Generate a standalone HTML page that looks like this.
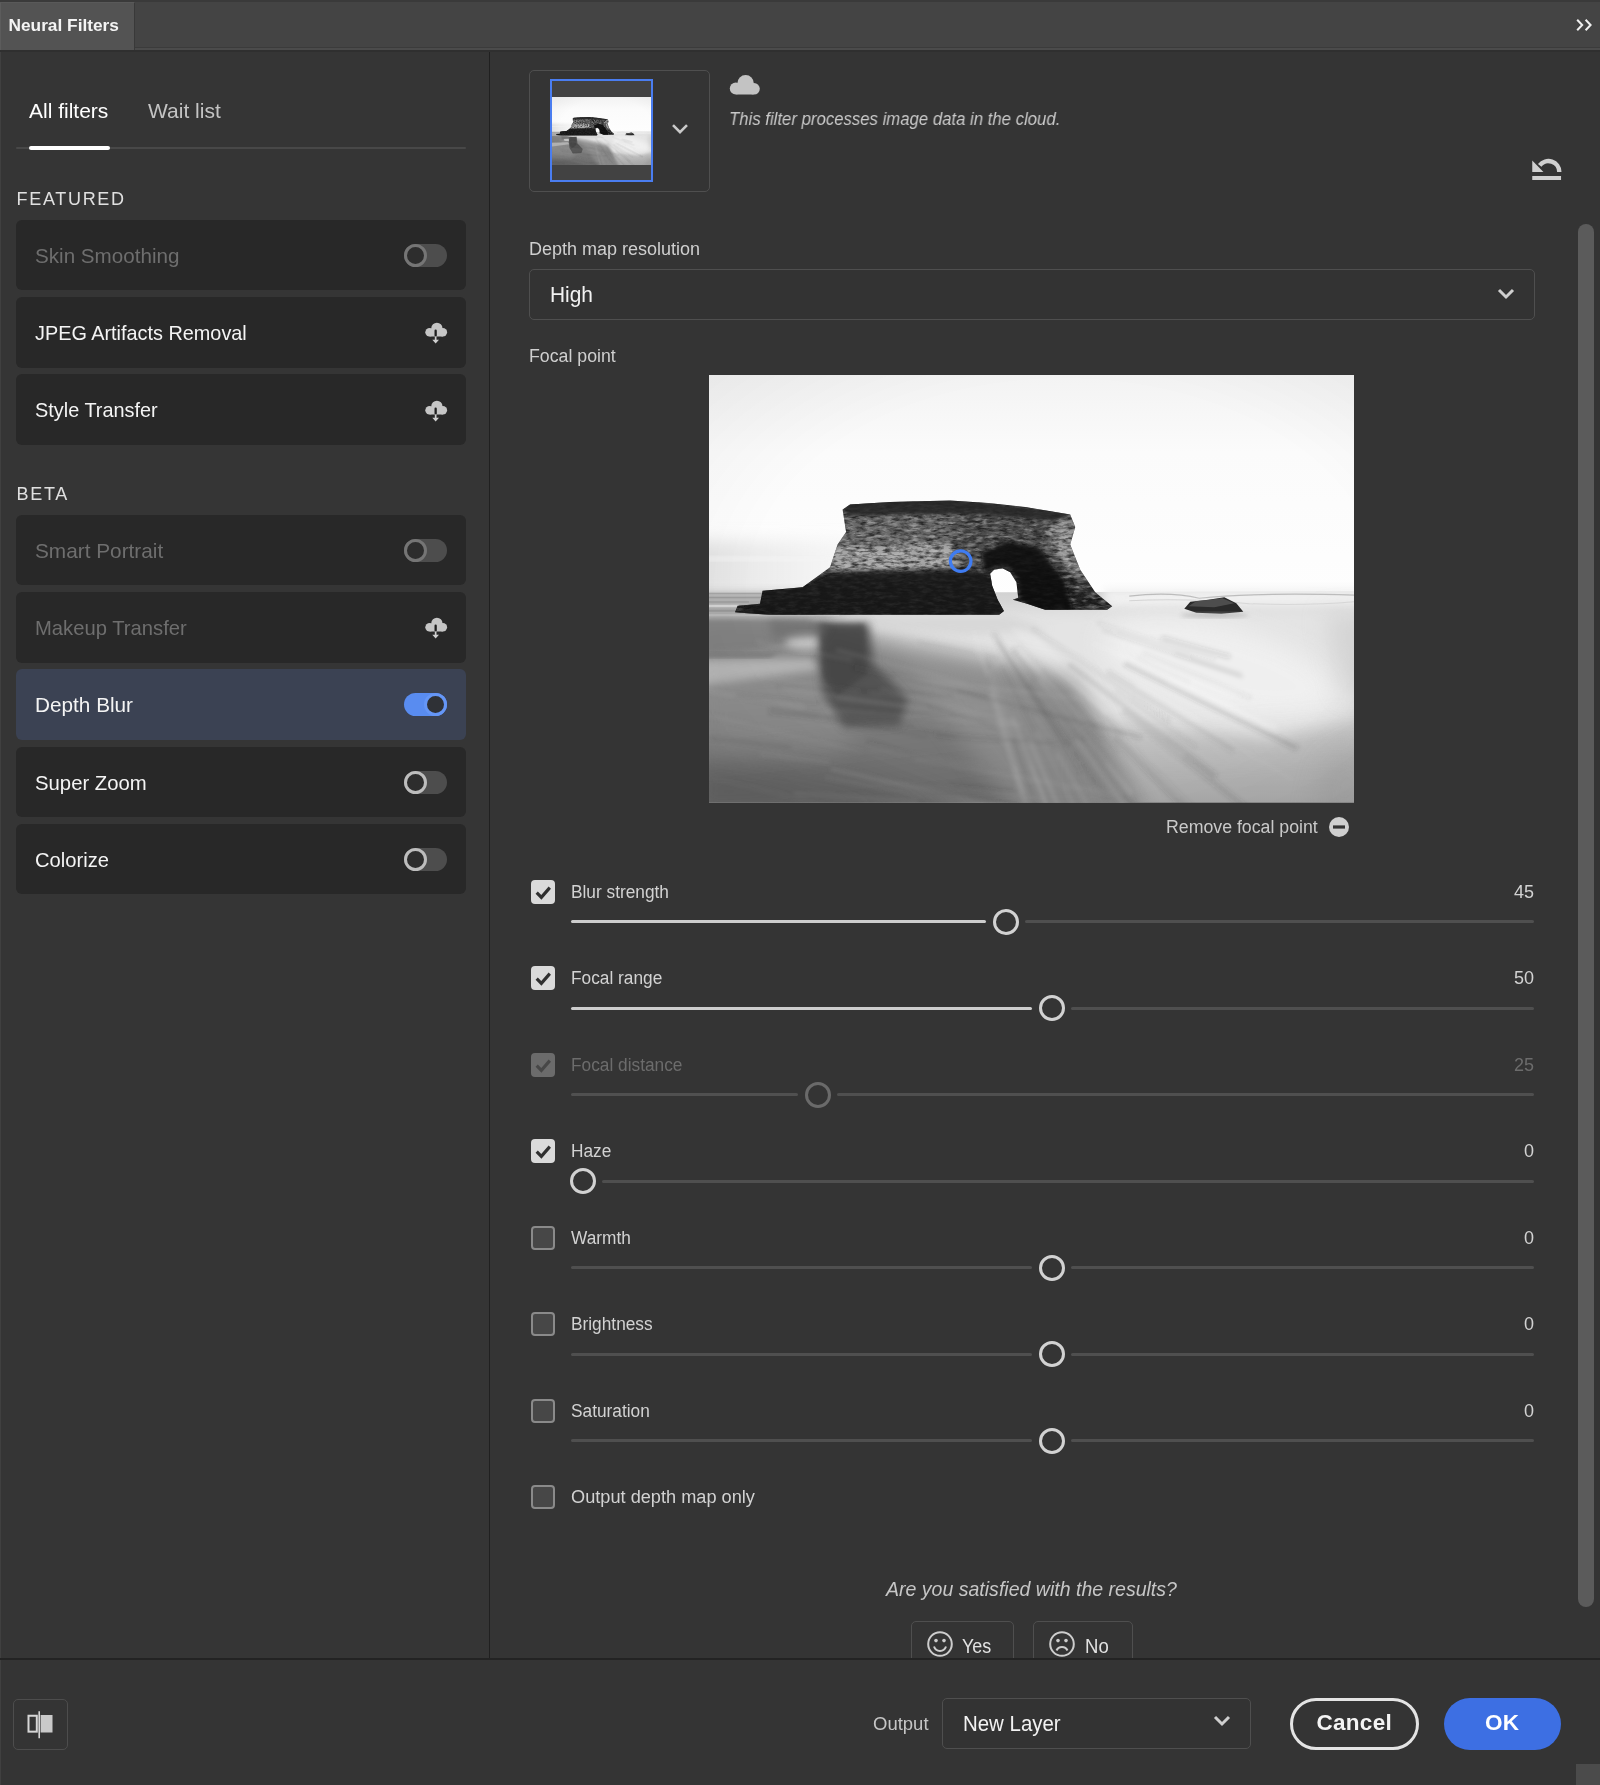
<!DOCTYPE html>
<html><head><meta charset="utf-8"><title>Neural Filters</title>
<style>
*{box-sizing:border-box;margin:0;padding:0}
html,body{width:1600px;height:1785px;overflow:hidden;background:#343434;font-family:"Liberation Sans",sans-serif;color:#e6e6e6}
.abs{position:absolute}
#L,#right,#footer,#titlebar{will-change:transform}
#titlebar{position:absolute;left:0;top:0;width:1600px;height:52px;background:#444;border-top:2px solid #3a3a3a;border-bottom:2px solid #2f2f2f;z-index:5}
#titlebar .tab{position:absolute;left:0;top:0;width:135px;height:48px;background:#535353;border-right:1px solid #393939;border-top:1px solid #595959;border-left:1px solid #5c5c5c}
#titlebar .tab span{position:absolute;left:7.5px;top:12px;font-weight:bold;font-size:17.3px;color:#f4f4f4;white-space:nowrap}
#titlebar .line{position:absolute;left:135px;right:0;bottom:0;height:3px;background:#4b4b4b;border-top:1px solid #3b3b3b}
#left{position:absolute;left:0;top:50px;width:489px;height:1608px;background:#353535;border-left:1px solid #404040}
#vdiv{position:absolute;left:488.7px;top:50px;width:1.7px;height:1608px;background:#202020}
#right{position:absolute;left:490px;top:50px;width:1110px;height:1608px;background:#343434;overflow:hidden}
#footer{position:absolute;left:0;top:1657.5px;width:1600px;height:128px;background:#343434;border-top:2px solid #232323;box-shadow:inset 1px 0 0 #404040}
.tabs{position:absolute;left:16px;top:147px;width:450px;height:2.4px;background:#484848;border-radius:1px}
.tabs i{position:absolute;left:13px;top:-1.3px;width:81px;height:4.4px;border-radius:2.2px;background:#fff}
.t1,.t2{position:absolute;top:98.5px;font-size:21px;white-space:nowrap}
.t1{left:29px;color:#fff}.t2{left:148px;color:#c4c4c4}
.sec{position:absolute;left:16.5px;font-size:18px;letter-spacing:1.7px;color:#e0e0e0;white-space:nowrap}
.item{position:absolute;left:16px;width:450px;height:70.5px;background:#282828;border-radius:6px}
.item.sel{background:#3b4253}
.item span{position:absolute;left:19px;top:24px;font-size:21px;color:#f4f4f4;white-space:nowrap;transform:scaleX(.955);transform-origin:0 50%}
.item.dis span{color:#6e6e6e}
.tog{position:absolute;left:388px;top:24px;width:43px;height:23px;border-radius:12px;background:#4d4d4d}
.tog i{position:absolute;left:0;top:0;width:23px;height:23px;border-radius:50%;border:3px solid #bdbdbd;background:#2d2d2d}
.dis .tog i{border-color:#757575}
.tog.on{background:#598cf0}
.tog.on i{left:20px;border-color:#6596f6;background:#2f3136}
.cloud{position:absolute;left:407.5px;top:25.3px;width:24px;height:22px}

#R{position:absolute;left:-490px;top:-50px;width:1600px;height:1785px}
#R .lbl{position:absolute;margin-top:.7px;font-size:18px;color:#cfcfcf;white-space:nowrap;transform:scaleX(.96);transform-origin:0 50%}
#R .val{position:absolute;margin-top:.7px;right:66px;font-size:18px;color:#cfcfcf;white-space:nowrap;text-align:right}
.box{position:absolute;border:1.7px solid #4f4f4f;border-radius:5px}
.dd{position:absolute;border:1.7px solid #4f4f4f;border-radius:5px;background:#333}
.dd span{position:absolute;left:20px;font-size:22px;color:#f2f2f2;white-space:nowrap;transform:scaleX(.95);transform-origin:0 50%}
.cb{position:absolute;left:531px;width:24.4px;height:24.4px;border-radius:4px;background:#dadada}
.cb svg{position:absolute;left:0;top:0;width:24.4px;height:24.4px}
.cb.off{background:#474747;border:2px solid #8a8a8a}
.cb.dis{background:#6b6b6b}
.trk{position:absolute;height:3.2px;border-radius:2px;background:#4f4f4f}
.trk.f{background:#cdcdcd}
.trk.fd{background:#505050}
.th{position:absolute;width:26.2px;height:26.2px;border-radius:50%;border:3.8px solid #d2d2d2}
.th.dis{border-color:#6a6a6a}
.it{font-style:italic}
</style></head><body>
<svg width="0" height="0" style="position:absolute"><defs><symbol id="photo" viewBox="0 0 645 426"><defs>
<linearGradient id="pSky" x1="0" y1="0" x2="0" y2="1"><stop offset="0" stop-color="#f3f3f3"/><stop offset=".18" stop-color="#fbfbfb"/><stop offset=".55" stop-color="#fefefe"/><stop offset="1" stop-color="#f7f7f7"/></linearGradient>
<radialGradient id="pVig" cx=".55" cy=".5" r=".8"><stop offset=".6" stop-color="#000" stop-opacity="0"/><stop offset="1" stop-color="#000" stop-opacity=".05"/></radialGradient>
<linearGradient id="pSkyL" x1="0" y1="0" x2="1" y2="0"><stop offset="0" stop-color="#d6d6d6" stop-opacity=".75"/><stop offset="1" stop-color="#e6e6e6" stop-opacity="0"/></linearGradient>
<linearGradient id="pSea" x1="0" y1="0" x2="0" y2="1"><stop offset="0" stop-color="#d2d2d2"/><stop offset=".15" stop-color="#d8d8d8"/><stop offset=".55" stop-color="#d0d0d0"/><stop offset=".8" stop-color="#bcbcbc"/><stop offset="1" stop-color="#a8a8a8"/></linearGradient>
<linearGradient id="pSand" x1="0" y1="0" x2=".25" y2="1"><stop offset="0" stop-color="#8e8e8e"/><stop offset=".5" stop-color="#7e7e7e"/><stop offset="1" stop-color="#6a6a6a"/></linearGradient>
<linearGradient id="pRock" x1="0" y1="0" x2="0" y2="1"><stop offset="0" stop-color="#3c3c3c"/><stop offset=".12" stop-color="#545454"/><stop offset=".5" stop-color="#5a5a5a"/><stop offset=".66" stop-color="#333"/><stop offset="1" stop-color="#1b1b1b"/></linearGradient>
<filter id="pB1" x="-10%" y="-10%" width="120%" height="120%"><feGaussianBlur stdDeviation="1"/></filter>
<filter id="pB2" x="-20%" y="-20%" width="140%" height="140%"><feGaussianBlur stdDeviation="2"/></filter>
<filter id="pB4" x="-30%" y="-30%" width="160%" height="160%"><feGaussianBlur stdDeviation="4"/></filter>
<filter id="pB8" x="-40%" y="-40%" width="180%" height="180%"><feGaussianBlur stdDeviation="8"/></filter>
<filter id="pB12" x="-50%" y="-50%" width="200%" height="200%"><feGaussianBlur stdDeviation="12"/></filter>
<filter id="pB20" x="-60%" y="-60%" width="220%" height="220%"><feGaussianBlur stdDeviation="20"/></filter>
<filter id="pTex" x="0" y="0" width="100%" height="100%"><feTurbulence type="fractalNoise" baseFrequency=".09 .3" numOctaves="3" seed="4" result="n"/><feColorMatrix in="n" type="matrix" values="0 0 0 0 0  0 0 0 0 0  0 0 0 0 0  2.4 0 0 0 -.95" result="a"/><feFlood flood-color="#cfcfcf"/><feComposite in2="a" operator="in"/><feComposite in2="SourceAlpha" operator="in"/></filter>
<filter id="pTexD" x="0" y="0" width="100%" height="100%"><feTurbulence type="fractalNoise" baseFrequency=".12 .35" numOctaves="3" seed="11" result="n"/><feColorMatrix in="n" type="matrix" values="0 0 0 0 0  0 0 0 0 0  0 0 0 0 0  0 2.6 0 0 -1.05" result="a"/><feFlood flood-color="#101010"/><feComposite in2="a" operator="in"/><feComposite in2="SourceAlpha" operator="in"/></filter>
<clipPath id="pClip"><rect width="645" height="426"/></clipPath>
<path id="pRockShape" d="M26 236.5l2.5-6.5 22.5-2 2.5-13 40-3.5 27.5-20 7.5-22.5 8.5-12.5-3.5-22.5 7.5-5 40-2.5 60-1.5 38 2.5 37 4 45 7.5 5 12.5-5 17.5 10 25 15 22.5 17 14-5 3.500h-62l-18-6-14.5-4 5.5-2-1.750-15.5-6.250-10-7.5-3.750-8.5 1.250-4 4 2 12 5.5 14 6.250 11.250-4.750 3.750h-230z"/>
<clipPath id="pRockClip"><use href="#pRockShape"/></clipPath>
</defs><g clip-path="url(#pClip)">
<rect width="645" height="426" fill="url(#pSky)"/>
<rect x="-20" y="165" width="230" height="56" fill="url(#pSkyL)" filter="url(#pB8)"/>
<rect x="-10" y="181" width="130" height="4" fill="#f4f4f4" opacity=".8" filter="url(#pB2)"/>
<path d="M0 217.500l645-2v212h-645z" fill="url(#pSea)"/>
<rect x="395" y="213" width="270" height="20" fill="#f1f1f1" filter="url(#pB4)"/>
<path d="M-10 216h140l10 26h-150z" fill="#a6a6a6" opacity=".75" filter="url(#pB4)"/><rect x="0" y="217" width="120" height="1.5" fill="#9a9a9a" opacity=".7"/><rect x="0" y="234" width="30" height="2" fill="#888" opacity=".6"/><rect x="0" y="238.5" width="130" height="2" fill="#e8e8e8" opacity=".6"/>
<rect x="0" y="221" width="60" height="1.6" fill="#8c8c8c" opacity=".6"/><rect x="0" y="225.5" width="40" height="1.5" fill="#8c8c8c" opacity=".5"/><rect x="0" y="229" width="30" height="2.5" fill="#eee" opacity=".7"/>
<path d="M420 220.500q40-5 70 2 60-6 155-3" fill="none" stroke="#a4a4a4" stroke-width="1.2" opacity=".7"/>
<path d="M420 225q60-3 120 3 60 2 105-2" fill="none" stroke="#c4c4c4" stroke-width="1" opacity=".7"/>
<!-- foam base -->
<path d="M110 238l540-8v110l-90 22-160-18-58-42-142-42z" fill="#e4e4e4" filter="url(#pB8)"/>
<ellipse cx="510" cy="292" rx="120" ry="42" fill="#f2f2f2" opacity=".85" filter="url(#pB12)" transform="rotate(14 510 292)"/>
<!-- dark sand -->
<path d="M-20 243l120 1 25 6 75 22 163 32 25 46 50 95h-458z" fill="url(#pSand)" filter="url(#pB12)"/>
<path d="M-20 243l118 1 30 8 -40 14-50 8-58 4z" fill="#7e7e7e" opacity=".85" filter="url(#pB2)"/>
<path d="M-30 370l180 30 120 50h-300z" fill="#4a4a4a" opacity=".4" filter="url(#pB20)"/>
<path d="M190 280l160 30 24 50 50 85h-110z" fill="#a4a4a4" opacity=".45" filter="url(#pB12)"/>
<!-- bottom right mid gray -->
<path d="M408 455l-26-76 120-6 170-14v96z" fill="#a6a6a6" opacity=".3" filter="url(#pB20)"/>
<path d="M600 445l14-60 50-25v85z" fill="#8c8c8c" opacity=".25" filter="url(#pB12)"/>
<path d="M615 238h45v80h-25z" fill="#c4c4c4" opacity=".5" filter="url(#pB12)"/>
<!-- bright wet sand patch -->
<ellipse cx="98" cy="266" rx="22" ry="8" fill="#d2d2d2" opacity=".8" filter="url(#pB4)"/>
<path d="M-10 284l112-2 10 12-122 16z" fill="#c4c4c4" opacity=".75" filter="url(#pB4)"/><path d="M-10 277h80l-10 5h-70z" fill="#666" opacity=".5" filter="url(#pB2)"/>
<!-- light wash under rock -->
<path d="M120 240h180l40 14-80 6-120-8z" fill="#d6d6d6" opacity=".85" filter="url(#pB4)"/>
<path d="M-10 300l120-4 60 30-40 50-140 10z" fill="#a8a8a8" opacity=".28" filter="url(#pB12)"/>
<!-- reflection -->
<path d="M108 248l52-1 5 42 34 34-8 26-56 2-22-34z" fill="#4c4c4c" opacity=".85" filter="url(#pB4)"/>
<path d="M111 248h44l3 50-30 22-14-20z" fill="#3c3c3c" opacity=".5" filter="url(#pB2)"/>
<path d="M60 244l60 4-6 12-50 2z" fill="#6a6a6a" opacity=".6" filter="url(#pB4)"/>
<g fill="none" filter="url(#pB2)"><path d="M428 308L491 345" stroke="#fff" stroke-width="4.3" opacity="0.12"/><path d="M407 256L482 280" stroke="#555" stroke-width="2.5" opacity="0.07"/><path d="M444 288L521 321" stroke="#fff" stroke-width="4.2" opacity="0.10"/><path d="M332 295L394 363" stroke="#555" stroke-width="3.0" opacity="0.10"/><path d="M452 262L521 281" stroke="#3a3a3a" stroke-width="5.5" opacity="0.11"/><path d="M310 281L422 420" stroke="#fff" stroke-width="2.7" opacity="0.11"/><path d="M459 303L567 353" stroke="#fff" stroke-width="4.3" opacity="0.14"/><path d="M293 291L354 411" stroke="#555" stroke-width="3.8" opacity="0.12"/><path d="M348 377L402 470" stroke="#fff" stroke-width="4.8" opacity="0.07"/><path d="M405 361L519 476" stroke="#3a3a3a" stroke-width="5.5" opacity="0.13"/><path d="M460 304L559 351" stroke="#fff" stroke-width="2.9" opacity="0.11"/><path d="M433 278L542 322" stroke="#555" stroke-width="3.8" opacity="0.07"/><path d="M413 334L545 438" stroke="#3a3a3a" stroke-width="5.9" opacity="0.13"/><path d="M327 289L381 350" stroke="#fff" stroke-width="2.9" opacity="0.08"/><path d="M393 254L534 301" stroke="#3a3a3a" stroke-width="2.6" opacity="0.09"/><path d="M378 302L456 361" stroke="#fff" stroke-width="4.1" opacity="0.13"/><path d="M372 319L415 359" stroke="#555" stroke-width="3.6" opacity="0.10"/><path d="M355 275L422 320" stroke="#fff" stroke-width="2.4" opacity="0.10"/><path d="M302 251L398 338" stroke="#fff" stroke-width="4.5" opacity="0.15"/><path d="M403 354L499 447" stroke="#555" stroke-width="5.4" opacity="0.07"/><path d="M283 317L313 418" stroke="#fff" stroke-width="5.0" opacity="0.07"/><path d="M328 306L414 417" stroke="#fff" stroke-width="5.8" opacity="0.08"/><path d="M415 287L588 372" stroke="#3a3a3a" stroke-width="5.5" opacity="0.16"/><path d="M312 275L377 350" stroke="#fff" stroke-width="2.9" opacity="0.10"/><path d="M362 291L474 379" stroke="#fff" stroke-width="5.3" opacity="0.14"/><path d="M303 273L375 366" stroke="#3a3a3a" stroke-width="6.0" opacity="0.13"/><path d="M319 308L360 369" stroke="#3a3a3a" stroke-width="5.7" opacity="0.10"/><path d="M306 389L332 475" stroke="#fff" stroke-width="3.9" opacity="0.07"/><path d="M383 267L569 352" stroke="#fff" stroke-width="4.6" opacity="0.11"/><path d="M284 257L356 369" stroke="#555" stroke-width="5.0" opacity="0.14"/><path d="M322 253L461 345" stroke="#3a3a3a" stroke-width="5.8" opacity="0.07"/><path d="M330 303L423 417" stroke="#fff" stroke-width="2.7" opacity="0.13"/><path d="M288 265L371 395" stroke="#555" stroke-width="3.4" opacity="0.13"/><path d="M309 252L352 286" stroke="#fff" stroke-width="5.7" opacity="0.11"/><path d="M434 314L584 404" stroke="#fff" stroke-width="2.9" opacity="0.06"/><path d="M405 314L487 371" stroke="#555" stroke-width="2.2" opacity="0.14"/><path d="M371 360L454 468" stroke="#555" stroke-width="5.5" opacity="0.14"/><path d="M327 356L383 466" stroke="#fff" stroke-width="3.9" opacity="0.08"/><path d="M339 315L397 387" stroke="#555" stroke-width="2.4" opacity="0.14"/><path d="M325 265L395 323" stroke="#fff" stroke-width="4.2" opacity="0.11"/><path d="M367 364L430 450" stroke="#fff" stroke-width="3.8" opacity="0.13"/><path d="M359 288L507 400" stroke="#3a3a3a" stroke-width="5.6" opacity="0.15"/><path d="M388 247L506 283" stroke="#555" stroke-width="2.3" opacity="0.10"/><path d="M359 365L398 421" stroke="#3a3a3a" stroke-width="5.5" opacity="0.07"/><path d="M276 281L328 435" stroke="#555" stroke-width="2.7" opacity="0.15"/><path d="M310 269L410 375" stroke="#555" stroke-width="2.8" opacity="0.09"/><path d="M427 282L481 306" stroke="#555" stroke-width="2.1" opacity="0.10"/><path d="M408 277L529 332" stroke="#fff" stroke-width="5.7" opacity="0.07"/><path d="M465 277L532 299" stroke="#3a3a3a" stroke-width="5.1" opacity="0.06"/><path d="M320 364L352 437" stroke="#fff" stroke-width="4.1" opacity="0.11"/><path d="M342 269L419 322" stroke="#fff" stroke-width="2.3" opacity="0.10"/><path d="M303 340L355 475" stroke="#fff" stroke-width="2.9" opacity="0.12"/><path d="M281 310L325 461" stroke="#fff" stroke-width="4.8" opacity="0.06"/><path d="M321 388L350 461" stroke="#fff" stroke-width="3.2" opacity="0.08"/><path d="M435 283L527 322" stroke="#fff" stroke-width="5.2" opacity="0.09"/><path d="M264 254L278 300" stroke="#fff" stroke-width="3.0" opacity="0.11"/><path d="M398 296L525 374" stroke="#555" stroke-width="5.6" opacity="0.11"/><path d="M280 293L303 362" stroke="#fff" stroke-width="5.3" opacity="0.09"/><path d="M158 373L275 389" stroke="#bbb" stroke-width="3.6" opacity="0.08"/><path d="M226 359L347 367" stroke="#444" stroke-width="3.7" opacity="0.15"/><path d="M48 299L149 316" stroke="#ddd" stroke-width="2.2" opacity="0.08"/><path d="M72 313L270 339" stroke="#bbb" stroke-width="3.9" opacity="0.11"/><path d="M-20 312L94 331" stroke="#ddd" stroke-width="2.1" opacity="0.16"/><path d="M209 266L289 282" stroke="#444" stroke-width="1.6" opacity="0.11"/><path d="M144 291L278 322" stroke="#444" stroke-width="3.4" opacity="0.15"/><path d="M60 336L206 349" stroke="#444" stroke-width="3.3" opacity="0.16"/><path d="M127 274L257 308" stroke="#bbb" stroke-width="3.6" opacity="0.14"/><path d="M171 405L328 422" stroke="#bbb" stroke-width="1.6" opacity="0.14"/><path d="M85 417L209 425" stroke="#bbb" stroke-width="3.1" opacity="0.15"/><path d="M-19 335L153 376" stroke="#bbb" stroke-width="3.1" opacity="0.09"/><path d="M51 378L121 386" stroke="#ddd" stroke-width="2.1" opacity="0.14"/><path d="M217 330L287 350" stroke="#2e2e2e" stroke-width="3.4" opacity="0.14"/><path d="M2 362L82 371" stroke="#2e2e2e" stroke-width="3.1" opacity="0.09"/><path d="M116 334L312 349" stroke="#ddd" stroke-width="3.2" opacity="0.11"/><path d="M110 340L235 350" stroke="#ddd" stroke-width="2.3" opacity="0.09"/><path d="M61 332L132 345" stroke="#444" stroke-width="4.0" opacity="0.12"/><path d="M241 409L311 415" stroke="#2e2e2e" stroke-width="3.9" opacity="0.09"/><path d="M122 393L307 434" stroke="#ddd" stroke-width="2.7" opacity="0.17"/><path d="M25 319L218 361" stroke="#444" stroke-width="2.3" opacity="0.09"/><path d="M69 310L246 319" stroke="#2e2e2e" stroke-width="3.6" opacity="0.09"/><path d="M180 411L366 434" stroke="#2e2e2e" stroke-width="1.7" opacity="0.12"/><path d="M1 401L191 447" stroke="#bbb" stroke-width="2.2" opacity="0.09"/><path d="M158 365L239 389" stroke="#444" stroke-width="2.8" opacity="0.10"/><path d="M248 315L432 361" stroke="#444" stroke-width="3.8" opacity="0.17"/><path d="M181 346L248 361" stroke="#444" stroke-width="3.0" opacity="0.09"/><path d="M116 401L304 436" stroke="#ddd" stroke-width="2.7" opacity="0.11"/><path d="M187 302L384 324" stroke="#ddd" stroke-width="2.3" opacity="0.14"/><path d="M27 319L109 327" stroke="#444" stroke-width="2.9" opacity="0.13"/><path d="M193 308L312 330" stroke="#ddd" stroke-width="1.7" opacity="0.11"/><path d="M47 266L143 284" stroke="#bbb" stroke-width="3.4" opacity="0.12"/><path d="M127 322L240 337" stroke="#bbb" stroke-width="2.7" opacity="0.14"/><path d="M172 313L306 346" stroke="#ddd" stroke-width="1.7" opacity="0.17"/><path d="M161 317L281 332" stroke="#bbb" stroke-width="1.8" opacity="0.12"/><path d="M205 383L401 417" stroke="#bbb" stroke-width="2.5" opacity="0.17"/></g>
<!-- rock -->
<use href="#pRockShape" fill="url(#pRock)"/>
<g clip-path="url(#pRockClip)">
<path d="M134 140l100-4 30 12-14 16 10 22-34 14-106 0 8-28 8.5-12.500z" fill="#6e6e6e" opacity=".8" filter="url(#pB4)"/>
<path d="M126 171l118-3 8 23-130 6z" fill="#b4b4b4" opacity=".8" filter="url(#pB2)"/>
<path d="M246 140l70-4 44 8-10 14-40 22-60 4z" fill="#484848" opacity=".75" filter="url(#pB4)"/>
<path d="M338 152l24-10 5 10-5 17 10 25 10 14-22-12-18-26z" fill="#a0a0a0" opacity=".85" filter="url(#pB2)"/>
<use href="#pRockShape" fill="#fff" filter="url(#pTex)" opacity=".5"/>
<use href="#pRockShape" fill="#fff" filter="url(#pTexD)" opacity=".7"/>
<path d="M272 178l24-12 34 6 26 34 8 30h-40l-14-12-1-18-8-13-14-2-12 6z" fill="#0e0e0e" opacity=".9" filter="url(#pB2)"/>
<path d="M136 126l104-3 124 15-20 7-82-7-124 2z" fill="#262626" opacity=".85" filter="url(#pB1)"/>
<path d="M20 240l30-14 4-12 40-4 30-14 134-2 34 8 6 40z" fill="#121212" opacity=".82" filter="url(#pB2)"/>
</g>
<!-- small rock -->
<path d="M475 233l6-7 18-2 16-2.5 12 6 7 8.5-22 2-25-1z" fill="#2a2a2a"/>
<path d="M479 230.500l8-5 26-3 12 5-20 4z" fill="#5c5c5c" opacity=".7"/>
<ellipse cx="505" cy="239.5" rx="34" ry="2.5" fill="#9a9a9a" opacity=".5" filter="url(#pB2)"/>
<rect width="645" height="426" fill="url(#pVig)"/>
</g></symbol>
</defs></svg>
<div id="titlebar"><div class="line"></div><div class="tab"><span>Neural Filters</span></div>
<svg class="abs" style="left:1574px;top:15.1px" width="20" height="16" viewBox="0 0 20 16"><path d="M3.2 2.7l5 5.3-5 5.3M11.6 2.7l5 5.3-5 5.3" fill="none" stroke="#f0f0f0" stroke-width="2"/></svg>
</div>
<div id="left"></div><div id="vdiv"></div>
<div id="L">
<div class="t1">All filters</div><div class="t2">Wait list</div><div class="tabs"><i></i></div>
<div class="sec" style="top:188.5px">FEATURED</div>
<div class="sec" style="top:483.5px">BETA</div>
<div class="item dis" style="top:219.5px"><span style="transform:scaleX(0.982)">Skin Smoothing</span><div class="tog"><i></i></div></div>
<div class="item " style="top:297px"><span style="transform:scaleX(0.945)">JPEG Artifacts Removal</span><svg class="cloud" viewBox="0 0 24 22"><g fill="#c6c6c6"><circle cx="5.6" cy="10.2" r="4.3"/><circle cx="12.9" cy="6.3" r="5.6"/><circle cx="18.9" cy="10.3" r="4.2"/><rect x="5.6" y="8" width="13.3" height="6.5"/></g><rect x="10.5" y="7.6" width="2.3" height="7" rx="1.1" fill="#1d1d1d"/><path d="M10.8 14.5h1.7v3.3h2.5l-3.35 3.8-3.35-3.8h2.5z" fill="#d0d0d0"/></svg></div>
<div class="item " style="top:374.3px"><span style="transform:scaleX(0.947)">Style Transfer</span><svg class="cloud" viewBox="0 0 24 22"><g fill="#c6c6c6"><circle cx="5.6" cy="10.2" r="4.3"/><circle cx="12.9" cy="6.3" r="5.6"/><circle cx="18.9" cy="10.3" r="4.2"/><rect x="5.6" y="8" width="13.3" height="6.5"/></g><rect x="10.5" y="7.6" width="2.3" height="7" rx="1.1" fill="#1d1d1d"/><path d="M10.8 14.5h1.7v3.3h2.5l-3.35 3.8-3.35-3.8h2.5z" fill="#d0d0d0"/></svg></div>
<div class="item dis" style="top:514.7px"><span style="transform:scaleX(0.990)">Smart Portrait</span><div class="tog"><i></i></div></div>
<div class="item dis" style="top:592px"><span style="transform:scaleX(0.963)">Makeup Transfer</span><svg class="cloud" viewBox="0 0 24 22"><g fill="#c6c6c6"><circle cx="5.6" cy="10.2" r="4.3"/><circle cx="12.9" cy="6.3" r="5.6"/><circle cx="18.9" cy="10.3" r="4.2"/><rect x="5.6" y="8" width="13.3" height="6.5"/></g><rect x="10.5" y="7.6" width="2.3" height="7" rx="1.1" fill="#1d1d1d"/><path d="M10.8 14.5h1.7v3.3h2.5l-3.35 3.8-3.35-3.8h2.5z" fill="#d0d0d0"/></svg></div>
<div class="item sel" style="top:669.2px"><span style="transform:scaleX(0.988)">Depth Blur</span><div class="tog on"><i></i></div></div>
<div class="item " style="top:746.5px"><span style="transform:scaleX(0.967)">Super Zoom</span><div class="tog"><i></i></div></div>
<div class="item " style="top:823.8px"><span style="transform:scaleX(0.961)">Colorize</span><div class="tog"><i></i></div></div>
</div>
<div id="right"><div id="R">
<div class="box" style="left:528.5px;top:69.5px;width:181px;height:122px"></div>
<div class="abs" style="left:549.6px;top:79px;width:103.6px;height:103px;background:#424242;border:2px solid #4a7df0"><svg class="abs" style="left:0;top:15.7px" width="99.6" height="68.5" viewBox="0 0 645 426" preserveAspectRatio="none"><use href="#photo"/></svg></div>
<svg class="abs" style="left:670px;top:121px" width="20" height="16" viewBox="0 0 20 16"><path d="M3 4.2l7 7 7-7" fill="none" stroke="#cacaca" stroke-width="2.6"/></svg>
<svg class="abs" style="left:729px;top:74px" width="32" height="22" viewBox="0 0 32 22"><g fill="#c3c3c3"><circle cx="6.8" cy="14.6" r="6"/><circle cx="16.6" cy="9.2" r="8.2"/><circle cx="25" cy="14.8" r="5.8"/><rect x="6.8" y="11" width="18.2" height="9.6" rx="1"/></g></svg>
<div class="lbl it" style="left:729px;top:107.6px;font-size:18.5px;color:#c9c9c9;transform:scaleX(.905)">This filter processes image data in the cloud.</div>
<svg class="abs" style="left:1530px;top:155px" width="34" height="30" viewBox="0 0 34 30"><path d="M29.3 17a10.9 10.9 0 0 0-19.6-6.6" fill="none" stroke="#d0d0d0" stroke-width="4.4"/><path d="M2.25 5.4v11.6h11.2z" fill="#d0d0d0"/><rect x="2.25" y="21" width="28.8" height="4" fill="#d0d0d0"/></svg>
<div class="lbl" style="left:529px;top:238px;transform:none">Depth map resolution</div>
<div class="dd" style="left:528.5px;top:268.5px;width:1006px;height:51px"><span style="top:12.5px">High</span><svg class="abs" style="left:966px;top:16px" width="20" height="16" viewBox="0 0 20 16"><path d="M3 4l7 7 7-7" fill="none" stroke="#cfcfcf" stroke-width="3"/></svg></div>
<div class="lbl" style="left:529px;top:345px;transform:scaleX(.985)">Focal point</div>
<svg class="abs" style="left:708.8px;top:375.4px" width="645.4" height="427.4" viewBox="0 0 645 426" preserveAspectRatio="none"><use href="#photo"/><circle cx="251.5" cy="185.5" r="10.3" fill="none" stroke="#3f7cf2" stroke-width="3.2"/></svg>
<div class="lbl" style="left:1166px;top:816px;color:#c9c9c9;transform:scaleX(.985)">Remove focal point</div>
<svg class="abs" style="left:1328px;top:816px" width="22" height="22" viewBox="0 0 22 22"><circle cx="11" cy="11" r="10" fill="#cfcfcf"/><rect x="5" y="9.4" width="12" height="3.2" fill="#333"/></svg>
<div class="cb" style="top:879.5px"><svg viewBox="0 0 24 24"><path d="M5.6 12.4l4.6 4.7 8.3-9.6" fill="none" stroke="#2f2f2f" stroke-width="3.1" stroke-linecap="butt"/></svg></div><div class="lbl" style="left:571px;top:881.2px;color:#d2d2d2">Blur strength</div><div class="val" style="top:881.2px;color:#d2d2d2">45</div><div class="trk f" style="left:570.6px;top:920.0px;width:415.6px"></div><div class="trk" style="left:1025.2px;top:920.0px;width:509.3px"></div><div class="th " style="left:992.9px;top:908.5px"></div>
<div class="cb" style="top:966.0px"><svg viewBox="0 0 24 24"><path d="M5.6 12.4l4.6 4.7 8.3-9.6" fill="none" stroke="#2f2f2f" stroke-width="3.1" stroke-linecap="butt"/></svg></div><div class="lbl" style="left:571px;top:967.8px;color:#d2d2d2">Focal range</div><div class="val" style="top:967.8px;color:#d2d2d2">50</div><div class="trk f" style="left:570.6px;top:1006.5px;width:461.6px"></div><div class="trk" style="left:1071.2px;top:1006.5px;width:463.3px"></div><div class="th " style="left:1038.9px;top:995.0px"></div>
<div class="cb dis" style="top:1052.5px"><svg viewBox="0 0 24 24"><path d="M5.6 12.4l4.6 4.7 8.3-9.6" fill="none" stroke="#474747" stroke-width="3.1" stroke-linecap="butt"/></svg></div><div class="lbl" style="left:571px;top:1054.2px;color:#6c6c6c">Focal distance</div><div class="val" style="top:1054.2px;color:#6c6c6c">25</div><div class="trk fd" style="left:570.6px;top:1093.0px;width:227.6px"></div><div class="trk" style="left:837.2px;top:1093.0px;width:697.3px"></div><div class="th dis" style="left:804.9px;top:1081.5px"></div>
<div class="cb" style="top:1139.0px"><svg viewBox="0 0 24 24"><path d="M5.6 12.4l4.6 4.7 8.3-9.6" fill="none" stroke="#2f2f2f" stroke-width="3.1" stroke-linecap="butt"/></svg></div><div class="lbl" style="left:571px;top:1140.8px;color:#d2d2d2">Haze</div><div class="val" style="top:1140.8px;color:#d2d2d2">0</div><div class="trk" style="left:602.2px;top:1179.5px;width:932.3px"></div><div class="th " style="left:569.9px;top:1168.0px"></div>
<div class="cb off" style="top:1225.5px"></div><div class="lbl" style="left:571px;top:1227.2px;color:#d2d2d2">Warmth</div><div class="val" style="top:1227.2px;color:#d2d2d2">0</div><div class="trk " style="left:570.6px;top:1266.0px;width:461.6px"></div><div class="trk" style="left:1071.2px;top:1266.0px;width:463.3px"></div><div class="th " style="left:1038.9px;top:1254.5px"></div>
<div class="cb off" style="top:1312.0px"></div><div class="lbl" style="left:571px;top:1313.8px;color:#d2d2d2">Brightness</div><div class="val" style="top:1313.8px;color:#d2d2d2">0</div><div class="trk " style="left:570.6px;top:1352.5px;width:461.6px"></div><div class="trk" style="left:1071.2px;top:1352.5px;width:463.3px"></div><div class="th " style="left:1038.9px;top:1341.0px"></div>
<div class="cb off" style="top:1398.5px"></div><div class="lbl" style="left:571px;top:1400.2px;color:#d2d2d2">Saturation</div><div class="val" style="top:1400.2px;color:#d2d2d2">0</div><div class="trk " style="left:570.6px;top:1439.0px;width:461.6px"></div><div class="trk" style="left:1071.2px;top:1439.0px;width:463.3px"></div><div class="th " style="left:1038.9px;top:1427.5px"></div>
<div class="cb off" style="top:1485.0px"></div><div class="lbl" style="left:571px;top:1486.8px;color:#d2d2d2;transform:scaleX(1.01)">Output depth map only</div>
<div class="lbl it" style="left:886px;top:1575.9px;font-size:21px;color:#c6c6c6;transform:scaleX(.93)">Are you satisfied with the results?</div>
<div class="box" style="left:910.5px;top:1620.5px;width:103px;height:52px"><svg class="abs" style="left:14px;top:8.8px" width="28" height="28" viewBox="0 0 28 28"><circle cx="14" cy="14" r="11.8" fill="none" stroke="#cdcdcd" stroke-width="2"/><circle cx="10" cy="10.6" r="1.8" fill="#cdcdcd"/><circle cx="18" cy="10.6" r="1.8" fill="#cdcdcd"/><path d="M8 16.5a6.3 6.3 0 0 0 12 0" fill="none" stroke="#cdcdcd" stroke-width="2"/></svg><span class="abs" style="left:50px;top:13.5px;font-size:19.5px;color:#e2e2e2;transform:scaleX(.92);transform-origin:0 50%">Yes</span></div>
<div class="box" style="left:1032.5px;top:1620.5px;width:100px;height:52px"><svg class="abs" style="left:14px;top:8.8px" width="28" height="28" viewBox="0 0 28 28"><circle cx="14" cy="14" r="11.8" fill="none" stroke="#cdcdcd" stroke-width="2"/><circle cx="10" cy="10.6" r="1.8" fill="#cdcdcd"/><circle cx="18" cy="10.6" r="1.8" fill="#cdcdcd"/><path d="M8.5 20.5a6 6 0 0 1 11 0" fill="none" stroke="#cdcdcd" stroke-width="2"/></svg><span class="abs" style="left:51px;top:13.5px;font-size:19.5px;color:#e2e2e2;transform:scaleX(.95);transform-origin:0 50%">No</span></div>
<div class="abs" style="left:1578px;top:224px;width:16px;height:1383px;border-radius:8px;background:#5b5b5b"></div>
</div>
</div>
<div id="footer">
<div class="box" style="left:12.5px;top:38.6px;width:55.3px;height:51.4px;border-color:#4d4d4d"><svg class="abs" style="left:12px;top:10.3px" width="28" height="30" viewBox="0 0 28 30"><rect x="2.5" y="5.75" width="8.3" height="15.9" fill="none" stroke="#d6d6d6" stroke-width="2"/><rect x="14.6" y="5" width="11.9" height="17.5" fill="#c9c9c9"/><path d="M13.2 1.3v27" stroke="#d6d6d6" stroke-width="1.6"/></svg></div>
<div class="abs" style="left:873px;top:53px;font-size:18.5px;color:#c6c6c6">Output</div>
<div class="dd" style="left:941.5px;top:38px;width:309px;height:51px"><span style="top:12.5px;font-size:21.5px">New Layer</span><svg class="abs" style="left:269px;top:14px" width="20" height="16" viewBox="0 0 20 16"><path d="M3 4l7 7 7-7" fill="none" stroke="#cfcfcf" stroke-width="3"/></svg></div>
<div class="abs" style="left:1290px;top:37.7px;width:128.5px;height:52px;border:3px solid #e4e4e4;border-radius:26px;text-align:center;font-weight:bold;font-size:22.5px;line-height:44px;color:#f4f4f4;letter-spacing:.3px">Cancel</div>
<div class="abs" style="left:1444px;top:37.7px;width:116.5px;height:52px;background:#3d6fe3;border-radius:26px;text-align:center;font-weight:bold;font-size:22.5px;line-height:50px;color:#fff;letter-spacing:.3px">OK</div>
<div class="abs" style="left:1575.5px;top:104px;width:25px;height:24px;background:#4b4b4b"></div>
</div>
</body></html>
